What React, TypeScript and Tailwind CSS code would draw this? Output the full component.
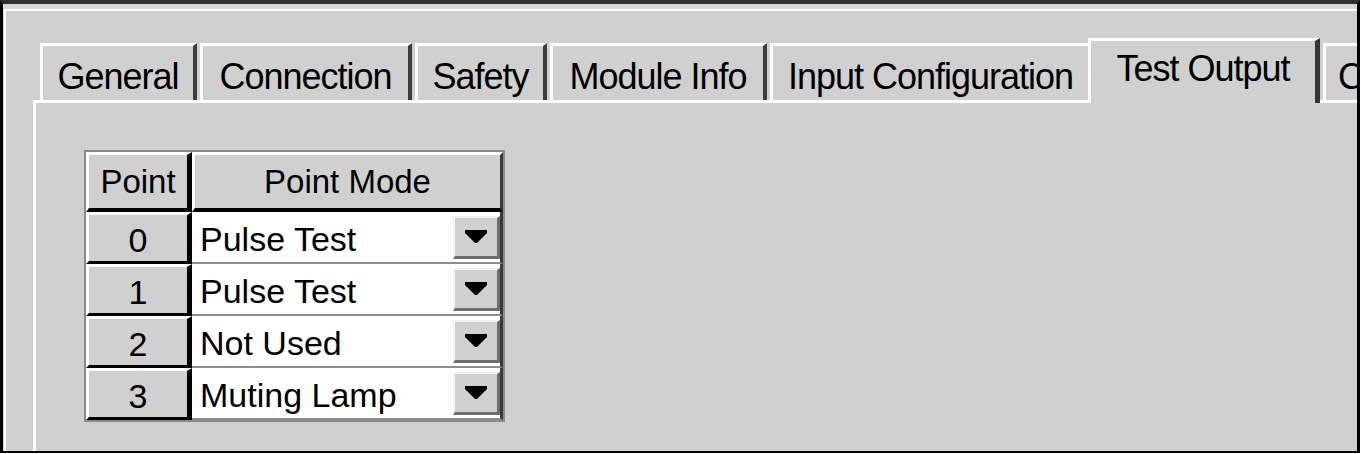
import React from "react";

const TABS = [
  { label: "General", cls: "w-[157px]" },
  { label: "Connection", cls: "w-[212px]" },
  { label: "Safety", cls: "w-[132px]" },
  { label: "Module Info", cls: "w-[217px]" },
  { label: "Input Configuration", cls: "w-[322px]" },
  { label: "Test Output", cls: "w-[232px] -ml-[7px]", active: true },
  { label: "C", cls: "w-[80px] justify-start pl-[12px]" },
];

const POINTS = [
  { point: "0", mode: "Pulse Test" },
  { point: "1", mode: "Pulse Test" },
  { point: "2", mode: "Not Used" },
  { point: "3", mode: "Muting Lamp" },
];

function Arrow() {
  return (
    <svg width="22" height="13" viewBox="0 0 22 13">
      <polygon points="0,0 22,0 22,3 12,13 10,13 0,3" fill="#000" />
    </svg>
  );
}

export default function App() {
  return (
    <div className="w-[1361px] h-[454px] bg-white pr-px pb-px font-['Liberation_Sans',Arial,sans-serif] text-black">
      <div className="h-full border-t-4 border-t-[#2f2f2f] border-l-[3px] border-l-black border-r-[3px] border-r-black border-b-2 border-b-black bg-[#d6d6d6] pt-[5px] pl-px overflow-hidden">
        <div className="h-full border-t-2 border-l-2 border-white bg-[#d0d0d0] pl-[27px] pt-[27px] flex flex-col">
          {/* tab strip */}
          <div className="flex items-end gap-[3px] pl-[7px]">
            {TABS.map((t) =>
              t.active ? (
                <div
                  key={t.label}
                  className={`${t.cls} shrink-0 relative z-10 h-[65px] -mb-[3px] flex justify-center border-t-[3px] border-l-[3px] border-t-white border-l-white border-r-[5px] border-r-[#353535] bg-[#d0d0d0] pt-[10px] text-[36px] leading-none tracking-[-1px] whitespace-nowrap`}
                >
                  {t.label}
                </div>
              ) : (
                <div
                  key={t.label}
                  className={`${t.cls} shrink-0 h-[57px] flex justify-center border-t-[3px] border-l-[3px] border-t-white border-l-white border-r-4 border-r-[#3c3c3c] bg-[#d0d0d0] pt-[13px] text-[36px] leading-none tracking-[-1px] whitespace-nowrap`}
                >
                  {t.label}
                </div>
              )
            )}
          </div>

          {/* tab panel */}
          <div className="flex-1 border-t-[3px] border-l-[3px] border-white pl-[48px] pt-[47px]">
            <div className="w-fit border-2 border-[#8a8a8a] grid grid-cols-[106px_311px]">
              <div className="h-[60px] flex items-center justify-center border-t-[3px] border-l-[3px] border-t-white border-l-white border-b-4 border-b-black border-r-[5px] border-r-black text-[33px] leading-none">
                Point
              </div>
              <div className="h-[60px] flex items-center justify-center border-t-[3px] border-l-[3px] border-t-white border-l-white border-b-4 border-b-black border-r-[3px] border-r-[#3a3a3a] text-[33px] leading-none">
                Point Mode
              </div>

              {POINTS.map((p) => (
                <React.Fragment key={p.point}>
                  <div className="h-[52px] flex items-center justify-center pt-[3px] border-t-[3px] border-l-[3px] border-t-white border-l-white border-b-[3px] border-b-black border-r-[5px] border-r-black text-[34px] leading-none">
                    {p.point}
                  </div>
                  <div className="h-[52px] flex items-center bg-white border-b-2 border-b-[#8c8c8c] border-r-[3px] border-r-[#3a3a3a] pl-[8px]">
                    <span className="flex-1 pt-[4px] text-[34px] leading-none whitespace-nowrap">
                      {p.mode}
                    </span>
                    <div className="w-[47px] h-[43px] flex items-center justify-center bg-[#d0d0d0] border-t-2 border-l-2 border-t-[#f4f4f4] border-l-[#f4f4f4] border-b-[3px] border-r-[3px] border-b-[#6e6e6e] border-r-[#6e6e6e]">
                      <Arrow />
                    </div>
                  </div>
                </React.Fragment>
              ))}
            </div>
          </div>
        </div>
      </div>
    </div>
  );
}
